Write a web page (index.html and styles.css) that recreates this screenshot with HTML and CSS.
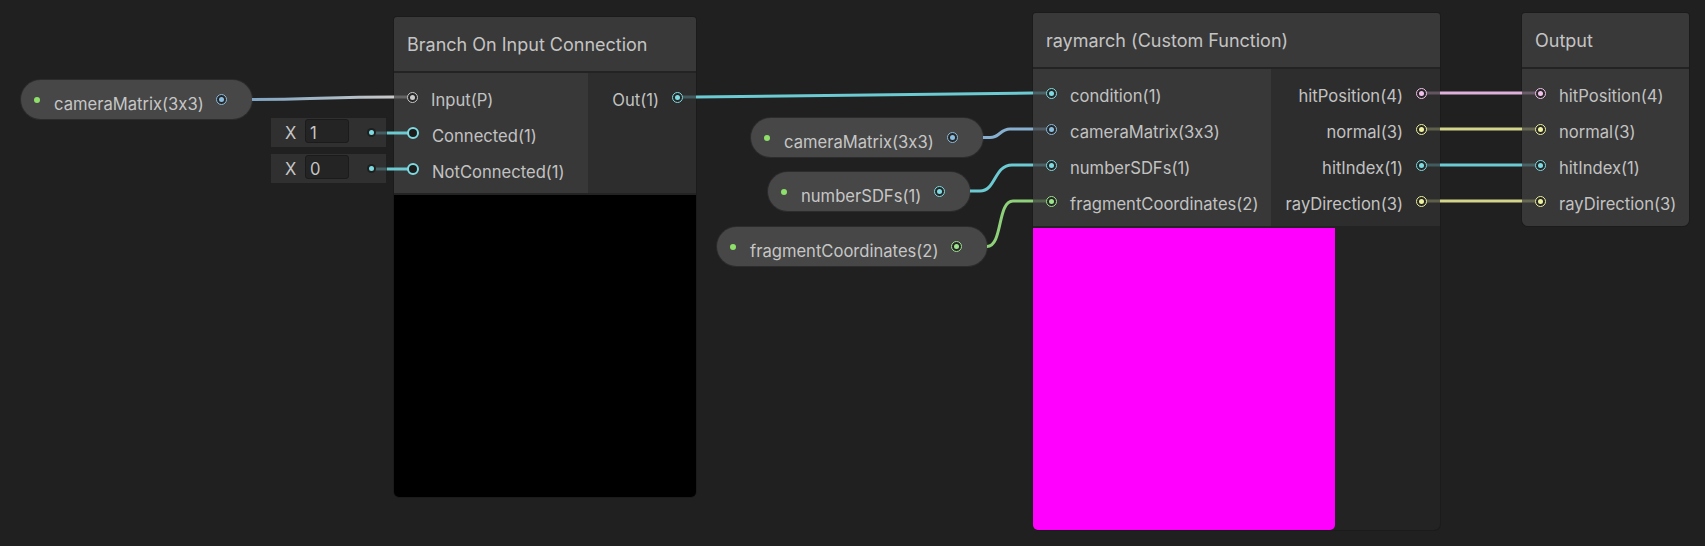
FILE: index.html
```html
<!DOCTYPE html>
<html>
<head>
<meta charset="utf-8">
<title>Shader Graph</title>
<link rel="stylesheet" href="styles.css">
</head>
<body>
<div class="graph">
  <svg class="wires" width="1705" height="546" viewBox="0 0 1705 546">
    <defs>
      <linearGradient id="gIn" gradientUnits="userSpaceOnUse" x1="252" y1="0" x2="394" y2="0">
        <stop offset="0" stop-color="#7fa4c2"/>
        <stop offset="1" stop-color="#c9c9c9"/>
      </linearGradient>
    </defs>
    <g fill="none" stroke-width="3">
      <path d="M252 99.5 C310 99.5 330 97 394 97" stroke="url(#gIn)"/>
      <path d="M394 97 H408" stroke="#c9c9c9" stroke-opacity="0.3"/>

      <path d="M375 133 H387" stroke="#6ccbd2" stroke-opacity="0.3"/>
      <path d="M387 133 H408" stroke="#6ccbd2"/>
      <path d="M375 169 H387" stroke="#6ccbd2" stroke-opacity="0.3"/>
      <path d="M387 169 H408" stroke="#6ccbd2"/>

      <path d="M683 97 H696" stroke="#6ccbd2" stroke-opacity="0.3"/>
      <path d="M696 97 L1033 93" stroke="#6ccbd2"/>
      <path d="M1033 93 H1047" stroke="#6ccbd2" stroke-opacity="0.3"/>

      <path d="M983 137.5 H990 C1000 137.5 1000 129 1010 129 H1033" stroke="#87afcf"/>
      <path d="M1033 129 H1047" stroke="#87afcf" stroke-opacity="0.3"/>

      <path d="M970 191 H980 C996 191 994 165 1012 165 H1033" stroke="#6ccbd2"/>
      <path d="M1033 165 H1047" stroke="#6ccbd2" stroke-opacity="0.3"/>

      <path d="M987 246.5 C1003 246.5 997 201 1013 201 H1033" stroke="#8fd17b"/>
      <path d="M1033 201 H1047" stroke="#8fd17b" stroke-opacity="0.3"/>

      <path d="M1426 93 H1440" stroke="#e0b0dc" stroke-opacity="0.3"/>
      <path d="M1440 93 H1522" stroke="#e0b0dc"/>
      <path d="M1522 93 H1536" stroke="#e0b0dc" stroke-opacity="0.3"/>

      <path d="M1426 129 H1440" stroke="#d3d68a" stroke-opacity="0.3"/>
      <path d="M1440 129 H1522" stroke="#d3d68a"/>
      <path d="M1522 129 H1536" stroke="#d3d68a" stroke-opacity="0.3"/>

      <path d="M1426 165 H1440" stroke="#6ccbd2" stroke-opacity="0.3"/>
      <path d="M1440 165 H1522" stroke="#6ccbd2"/>
      <path d="M1522 165 H1536" stroke="#6ccbd2" stroke-opacity="0.3"/>

      <path d="M1426 201 H1440" stroke="#d3d68a" stroke-opacity="0.3"/>
      <path d="M1440 201 H1522" stroke="#d3d68a"/>
      <path d="M1522 201 H1536" stroke="#d3d68a" stroke-opacity="0.3"/>
    </g>
  </svg>

  <div class="pill pill-cam-a"><span class="pdot"></span><span class="plabel">cameraMatrix(3x3)</span><span class="port on c-blue"></span></div>
  <div class="pill pill-cam-b"><span class="pdot"></span><span class="plabel">cameraMatrix(3x3)</span><span class="port on c-blue"></span></div>
  <div class="pill pill-num"><span class="pdot"></span><span class="plabel">numberSDFs(1)</span><span class="port on c-cyan"></span></div>
  <div class="pill pill-frag"><span class="pdot"></span><span class="plabel">fragmentCoordinates(2)</span><span class="port on c-green"></span></div>

  <div class="xfield xfield-a"><span class="xlabel">X</span><span class="xinput">1</span><span class="xdot"></span></div>
  <div class="xfield xfield-b"><span class="xlabel">X</span><span class="xinput">0</span><span class="xdot"></span></div>

  <div class="node node-branch">
    <div class="node-title">Branch On Input Connection</div>
    <div class="node-body">
      <div class="ins">
        <div class="row"><span class="port on c-gray"></span><span class="label">Input(P)</span></div>
        <div class="row"><span class="port off c-cyan"></span><span class="label">Connected(1)</span></div>
        <div class="row"><span class="port off c-cyan"></span><span class="label">NotConnected(1)</span></div>
      </div>
      <div class="outs">
        <div class="row"><span class="label">Out(1)</span><span class="port on c-cyan"></span></div>
      </div>
    </div>
    <div class="preview"><div class="preview-img black"></div></div>
  </div>

  <div class="node node-ray">
    <div class="node-title">raymarch (Custom Function)</div>
    <div class="node-body">
      <div class="ins">
        <div class="row"><span class="port on c-cyan"></span><span class="label">condition(1)</span></div>
        <div class="row"><span class="port on c-blue"></span><span class="label">cameraMatrix(3x3)</span></div>
        <div class="row"><span class="port on c-cyan"></span><span class="label">numberSDFs(1)</span></div>
        <div class="row"><span class="port on c-green"></span><span class="label">fragmentCoordinates(2)</span></div>
      </div>
      <div class="outs">
        <div class="row"><span class="label">hitPosition(4)</span><span class="port on c-pink"></span></div>
        <div class="row"><span class="label">normal(3)</span><span class="port on c-yellow"></span></div>
        <div class="row"><span class="label">hitIndex(1)</span><span class="port on c-cyan"></span></div>
        <div class="row"><span class="label">rayDirection(3)</span><span class="port on c-yellow"></span></div>
      </div>
    </div>
    <div class="preview"><div class="preview-img magenta"></div></div>
  </div>

  <div class="node node-out">
    <div class="node-title">Output</div>
    <div class="node-body">
      <div class="ins">
        <div class="row"><span class="port on c-pink"></span><span class="label">hitPosition(4)</span></div>
        <div class="row"><span class="port on c-yellow"></span><span class="label">normal(3)</span></div>
        <div class="row"><span class="port on c-cyan"></span><span class="label">hitIndex(1)</span></div>
        <div class="row"><span class="port on c-yellow"></span><span class="label">rayDirection(3)</span></div>
      </div>
    </div>
  </div>
</div>
</body>
</html>
```

FILE: styles.css
```css
* { box-sizing: border-box; }
html, body { margin: 0; background: #202020; }
body {
  font-family: Inter, "Noto Sans", sans-serif;
  font-feature-settings: "calt" 0;
  color: #c2c2c2;
}
.graph {
  position: relative;
  width: 1705px;
  height: 546px;
  overflow: hidden;
  background: #202020;
}
.wires { position: absolute; left: 0; top: 0; z-index: 1; }
.port, .pdot, .xdot { position: relative; z-index: 2; flex: none; }

.c-blue { --c: #8bbde0; }
.c-cyan { --c: #7fdbe2; }
.c-green { --c: #9de58c; }
.c-pink { --c: #f2c2ec; }
.c-yellow { --c: #eef1a0; }
.c-gray { --c: #cacaca; }

.port {
  width: 11px;
  height: 11px;
  border-radius: 50%;
  border: 1.5px solid var(--c);
  background: #262626;
  display: flex;
  align-items: center;
  justify-content: center;
}
.port.on::after {
  content: "";
  width: 5px;
  height: 5px;
  border-radius: 50%;
  background: var(--c);
}
.port.off {
  width: 12px;
  height: 12px;
  border-width: 2px;
  background: #1c1c1c;
}

/* property pills */
.pill {
  position: absolute;
  height: 39px;
  border-radius: 20px;
  background: #474747;
  box-shadow: 0 0 0 1px #2c2c2c;
  display: flex;
  align-items: center;
  padding-left: 13px;
  font-size: 16.6px;
  color: #c6c6c6;
}
.pdot {
  width: 6px;
  height: 6px;
  border-radius: 50%;
  background: #8ee06a;
  margin-right: 14px;
}
.plabel { padding-top: 8px; white-space: nowrap; }
.pill .port { margin-left: auto; margin-right: 25px; }
.pill-cam-a { left: 21px; top: 80px; width: 231px; }
.pill-cam-b { left: 751px; top: 118px; width: 232px; }
.pill-num { left: 768px; top: 172px; width: 202px; }
.pill-frag { left: 717px; top: 227px; width: 270px; }

/* inline value fields */
.xfield {
  position: absolute;
  left: 271px;
  width: 115px;
  height: 29px;
  background: #303030;
  display: flex;
  align-items: center;
  padding-left: 14px;
  font-size: 16.6px;
  color: #c6c6c6;
}
.xfield-a { top: 118px; }
.xfield-b { top: 154px; }
.xlabel { width: 20px; padding-top: 1px; }
.xinput {
  width: 44px;
  height: 24px;
  align-self: flex-start;
  margin-top: 1px;
  background: #242424;
  border: 1px solid #1b1b1b;
  border-radius: 3px;
  padding: 3px 0 0 4px;
  display: flex;
  align-items: center;
}
.xdot {
  width: 9px;
  height: 9px;
  border-radius: 50%;
  background: #1e1e1e;
  margin-left: auto;
  margin-right: 10px;
  display: flex;
  align-items: center;
  justify-content: center;
}
.xdot::after {
  content: "";
  width: 5px;
  height: 5px;
  border-radius: 50%;
  background: #7fdbe2;
}

/* nodes */
.node {
  position: absolute;
  display: flex;
  flex-direction: column;
  gap: 2px;
  background: #232323;
  border-radius: 3px 3px 6px 6px;
  box-shadow: 0 0 0 1px #1b1b1b;
}
.node-branch { left: 394px; top: 17px; width: 302px; }
.node-ray { left: 1033px; top: 13px; width: 407px; height: 517px; }
.node-out { left: 1522px; top: 13px; width: 167px; }

.node-title {
  height: 54px;
  background: #393939;
  display: flex;
  align-items: center;
  padding-left: 13px;
  font-size: 18px;
  color: #c4c4c4;
  white-space: nowrap;
  border-radius: 3px 3px 0 0;
}
.node-body { display: flex; height: 157px; }
.node-branch .node-body { height: 120px; }
.ins { background: #383838; padding-top: 6px; }
.outs { background: #2d2d2d; padding-top: 6px; flex: 1; }
.node-branch .ins { width: 194px; }
.node-ray .ins { width: 238px; }
.node-out .ins { width: 100%; border-radius: 0 0 6px 6px; }

.row {
  height: 36px;
  display: flex;
  align-items: center;
  font-size: 16.6px;
  white-space: nowrap;
}
.ins .row { padding-left: 13px; gap: 13px; }
.outs .row { justify-content: flex-end; padding-right: 13px; gap: 13px; }
.label { padding-top: 5px; }

.preview { height: 302px; display: flex; }
.preview-img { width: 302px; border-radius: 0 0 5px 5px; }
.black { background: #000; }
.magenta { background: #ff00ff; }
```
